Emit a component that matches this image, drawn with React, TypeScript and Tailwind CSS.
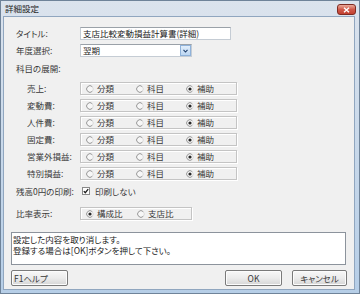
import * as React from "react";

function Radio({ checked }: { checked?: boolean }) {
  return (
    <svg width="8" height="8" viewBox="0 0 8 8" className="shrink-0">
      <circle cx="4" cy="4" r="3.3" fill="#f7f7f7" />
      <path d="M6.3 1.7A3.3 3.3 0 1 0 6.3 6.3" fill="none" stroke="#8d8d8d" strokeWidth="0.9" />
      <path d="M6.3 6.3A3.3 3.3 0 0 0 6.3 1.7" fill="none" stroke="#d6d6d6" strokeWidth="0.9" />
      {checked && <circle cx="4" cy="4" r="1.6" fill="#262626" />}
    </svg>
  );
}

function Check() {
  return (
    <svg width="8" height="8" viewBox="0 0 8 8" className="shrink-0">
      <rect x="0.5" y="0.5" width="7" height="7" fill="#fff" stroke="#8a8a8a" />
      <path d="M1.8 4.1 3.3 5.7 6.2 2.2" fill="none" stroke="#1c1c1c" strokeWidth="1.3" />
    </svg>
  );
}

function RadioGroup({
  items,
  selected,
  width,
}: {
  items: string[];
  selected: number;
  width: string;
}) {
  return (
    <div
      className={`flex h-[13px] items-center border border-[#c4c4c4] pl-[5px] shadow-[inset_1px_1px_0_#fff,1px_1px_0_#fff] ${width}`}
    >
      {items.map((t, i) => (
        <div key={t} className="flex w-[51px] items-center gap-[3px]">
          <Radio checked={i === selected} />
          <span>{t}</span>
        </div>
      ))}
    </div>
  );
}

const rows = ["売上:", "変動費:", "人件費:", "固定費:", "営業外損益:", "特別損益:"];

function Button({ children, className }: { children: React.ReactNode; className: string }) {
  return (
    <div
      className={`flex h-[16px] items-center rounded-[2px] border border-[#7a7a7a] bg-gradient-to-b from-[#f8f8f8] via-[#ececec] to-[#d6d6d6] shadow-[inset_0_0_0_1px_#fcfcfc] ${className}`}
    >
      {children}
    </div>
  );
}

export default function App() {
  return (
    <div className="flex h-[294px] w-[360px] flex-col border border-[#6f8399] bg-gradient-to-b from-[#dbe3ed] to-[#b6cee7] font-['Noto_Sans_CJK_JP','Noto_Sans_CJK_SC',sans-serif] text-[8.5px] leading-none text-[#383838] [font-feature-settings:'palt']">
      {/* title bar */}
      <div className="flex h-[15px] shrink-0 items-center justify-between pl-[4px] pr-[3px]">
        <span className="text-[#222]">詳細設定</span>
        <div className="mt-[2px] flex h-[11px] w-[19px] items-center justify-center rounded-[3px] border border-[#7f2b22] bg-gradient-to-b from-[#e9a99b] via-[#d0594a] to-[#c2402f]">
          <svg width="7" height="6" viewBox="0 0 7 6">
            <path d="M1 0.8 6 5.2M6 0.8 1 5.2" stroke="#fff" strokeWidth="1.4" />
          </svg>
        </div>
      </div>

      {/* body */}
      <div className="mb-[3px] ml-[2px] mr-[4px] flex flex-1 flex-col border border-[#90a6bf] bg-[#f0f0f0]">
        <div className="mt-[10px] flex h-[13px] items-center pl-[12px]">
          <span className="w-[64px]">タイトル:</span>
          <div className="flex h-[13px] w-[151px] items-center border border-[#c5ccd4] border-t-[#9aa1a8] bg-white pl-[2px] text-[#222]">
            支店比較変動損益計算書(詳細)
          </div>
        </div>

        <div className="mt-[4px] flex h-[13px] items-center pl-[12px]">
          <span className="w-[64px]">年度選択:</span>
          <div className="flex h-[13px] w-[112px] items-center justify-between border border-[#c5ccd4] border-t-[#9aa1a8] bg-white pl-[2px] text-[#222]">
            <span>翌期</span>
            <div className="flex h-[11px] w-[11px] items-center justify-center border border-[#8fb2da] bg-gradient-to-b from-[#e1eefb] to-[#bcd6f2]">
              <svg width="5" height="4" viewBox="0 0 5 4">
                <path d="M0.5 0.8 2.5 3 4.5 0.8" fill="none" stroke="#1f3f6b" strokeWidth="1.1" />
              </svg>
            </div>
          </div>
        </div>

        <div className="mt-[5px] flex h-[12px] items-center pl-[12px]">科目の展開:</div>

        <div className="mt-[8px] flex flex-col gap-[4px]">
          {rows.map((r) => (
            <div key={r} className="flex h-[13px] items-center pl-[23px]">
              <span className="w-[53px]">{r}</span>
              <RadioGroup items={["分類", "科目", "補助"]} selected={2} width="w-[157px]" />
            </div>
          ))}
        </div>

        <div className="mt-[5px] flex h-[12px] items-center pl-[12px]">
          <span className="w-[66px]">残高0円の印刷:</span>
          <Check />
          <span className="ml-[5px]">印刷しない</span>
        </div>

        <div className="mt-[10px] flex h-[13px] items-center pl-[12px]">
          <span className="w-[64px]">比率表示:</span>
          <RadioGroup items={["構成比", "支店比"]} selected={0} width="w-[112px]" />
        </div>

        <div className="ml-[7px] mt-[12px] h-[33px] w-[335px] border border-[#8c939c] bg-white pl-[1px] pt-[1px] leading-[11px] text-[#222]">
          <div>設定した内容を取り消します。</div>
          <div>登録する場合は[OK]ボタンを押して下さい。</div>
        </div>

        <div className="mt-[5px] flex items-center pl-[7px] pr-[7px]">
          <Button className="w-[57px] pl-[2px]">F1ヘルプ</Button>
          <div className="flex-1" />
          <Button className="w-[57px] justify-center">OK</Button>
          <Button className="ml-[10px] w-[55px] justify-center">キャンセル</Button>
        </div>
      </div>
    </div>
  );
}
